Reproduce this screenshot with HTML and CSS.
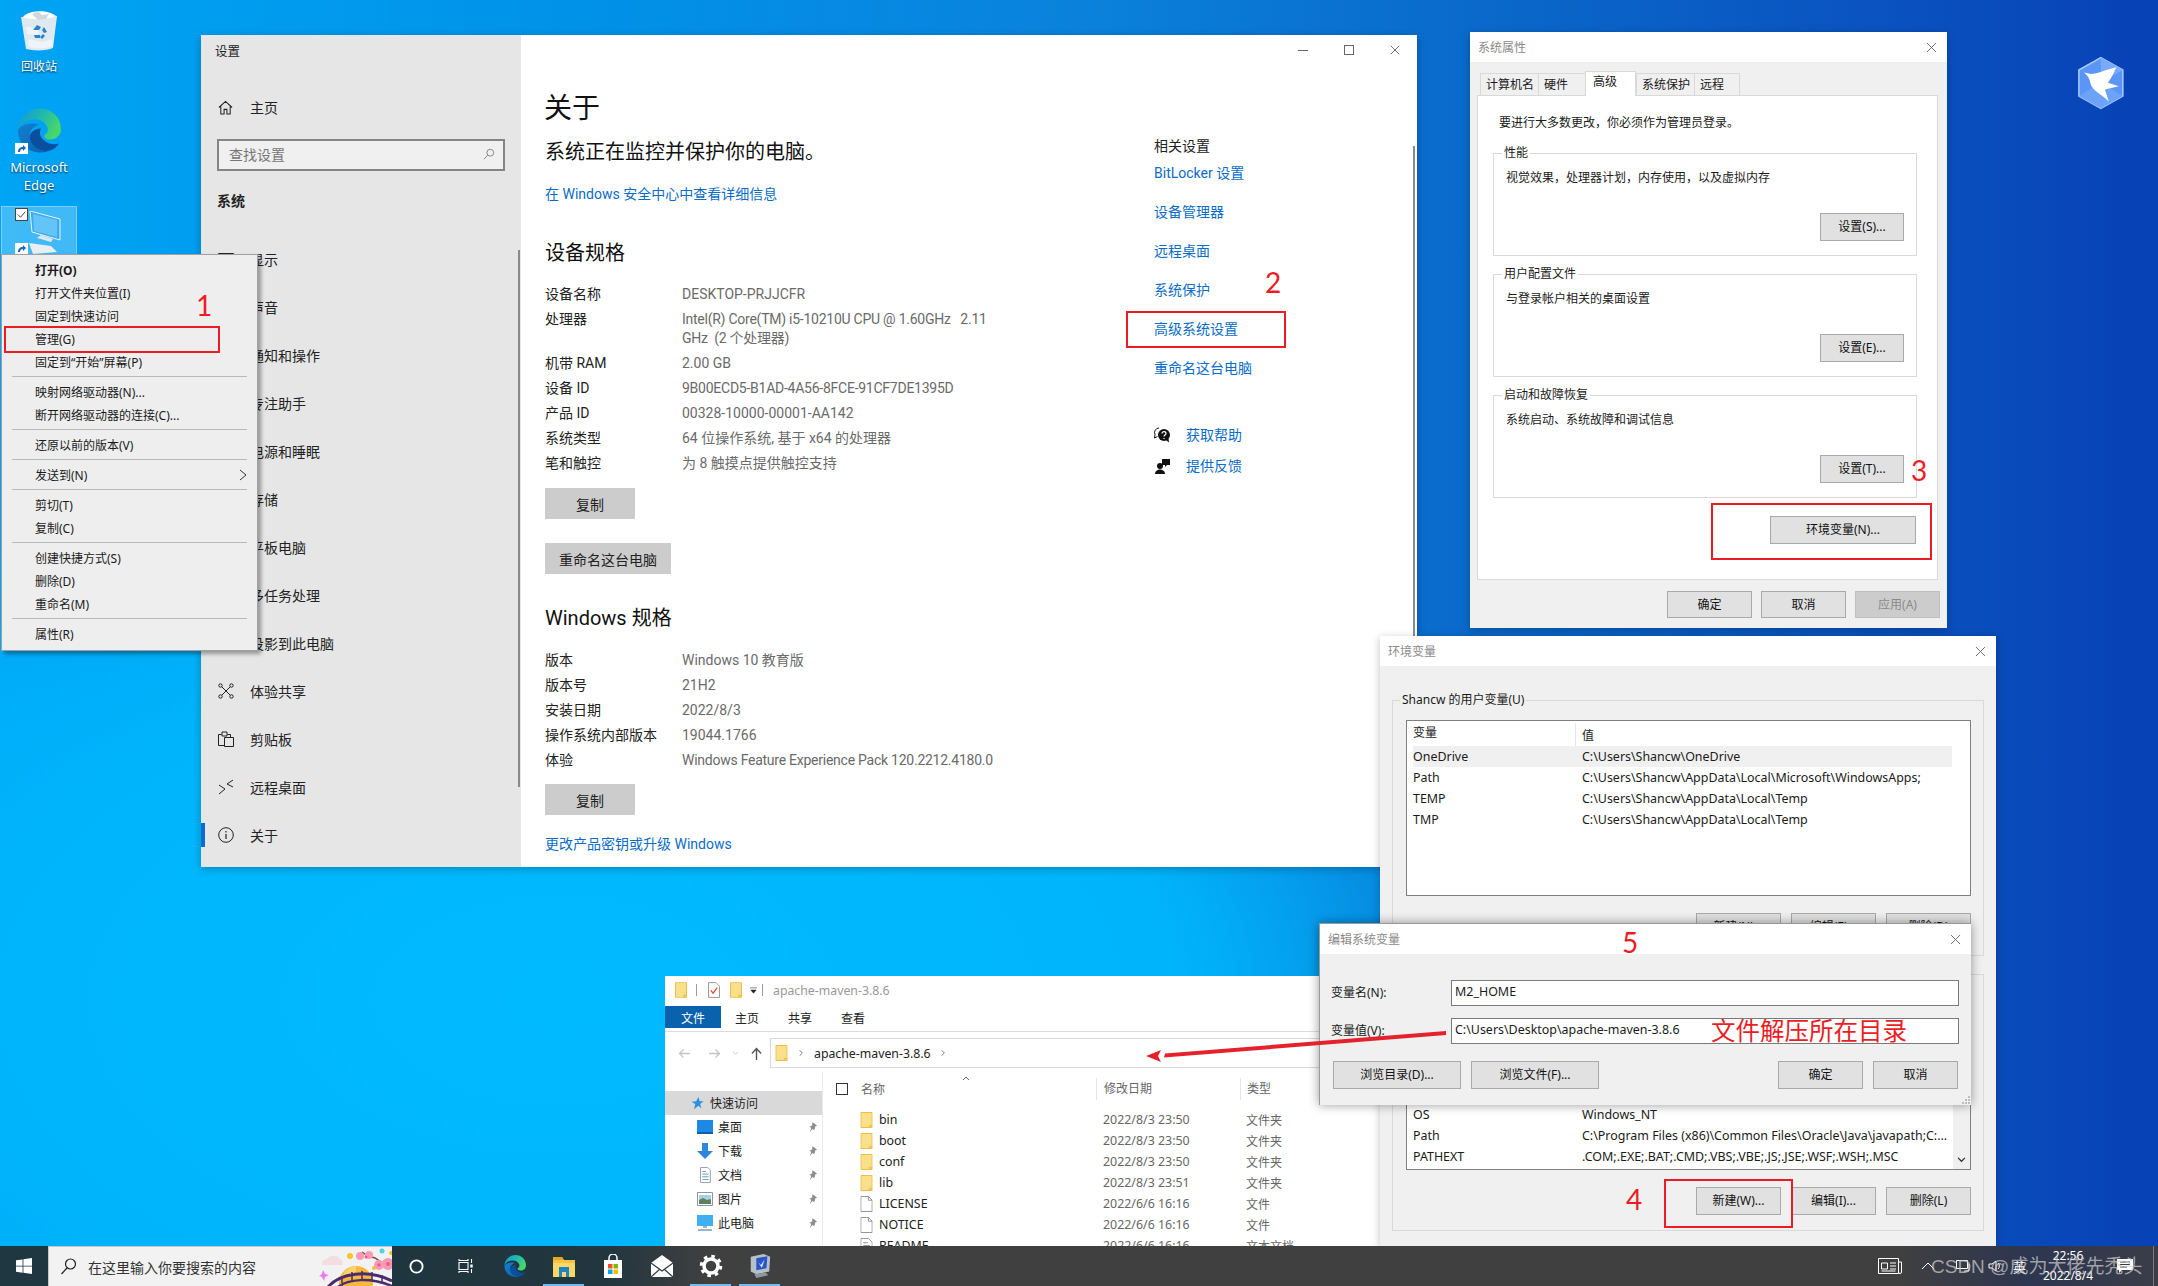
FILE: index.html
```html
<!DOCTYPE html>
<html lang="zh-CN">
<head>
<meta charset="utf-8">
<title>Windows 10 环境变量设置</title>
<link rel="stylesheet" href="styles.css">
</head>
<body>
<svg class="sprite" aria-hidden="true">
  <symbol id="x" viewBox="0 0 12 12"><path d="M1 1l10 10M11 1L1 11" fill="none" stroke="currentColor" stroke-width="1"/></symbol>
  <symbol id="folder" viewBox="0 0 13 17"><path d="M.5.5h12v16H.5z" fill="#fbe08c" stroke="#e6b93f"/><path d="M9 16.500v-3h3.500v3z" fill="#f2c552"/></symbol>
  <symbol id="file" viewBox="0 0 13 17"><path d="M.5.5h8l4 4v12H.5z" fill="#fff" stroke="#8f8f8f"/><path d="M8.500.5v4h4" fill="none" stroke="#8f8f8f"/></symbol>
  <symbol id="textfile" viewBox="0 0 13 17"><path d="M.5.5h8l4 4v12H.5z" fill="#fff" stroke="#8f8f8f"/><path d="M3 5h5M3 8h7M3 11h7" stroke="#8f8f8f"/></symbol>
  <symbol id="pin" viewBox="0 0 12 14"><path d="M6 1l5 4-2 1-1 4-2-1.500-3 3.500 1.600-4.400L2.500 6l3-1z" fill="#8a8f96"/></symbol>
  <symbol id="chev" viewBox="0 0 6 10"><path d="M1 1l4 4-4 4" fill="none" stroke="#666" stroke-width="1.300"/></symbol>
  <symbol id="arrow-sc" viewBox="0 0 13 11"><path d="M0 0h13v11H0z" fill="#fff"/><path d="M3 9c0-3 2-5 5-5V2l3 3-3 3V6c-2 0-3 1-3 3z" fill="#1565c8"/></symbol>
</svg>

<div class="desktop">
  <main class="canvas">

    <div class="desk-column">
      <div class="desk-icon recycle">
        <svg class="recycle-img" viewBox="0 0 38 43">
          <path d="M1 8l36-1-4 32c-6 3-20 3-27 1z" fill="#dfe9f0"/>
          <path d="M3 8C8 1 28 0 36 7 26 11 12 11 3 8z" fill="#fff"/>
          <path d="M12 5l6-3 4 4 7-1-3 5-8 1z" fill="#cfd8df"/>
          <path d="M6 18l13 1-1 7-11-1zM8 30l14 3 10-3 1 7c-8 3-18 3-24 1z" fill="#eef4f8"/>
          <path d="M13 21l4-5 4 2-2 3zM24 18l3 5-3 1-2-3zM14 26h6v3h-5zM25 27l-3 3-2-2 3-3z" fill="#2b83c9"/>
        </svg>
        <span class="desk-label">回收站</span>
      </div>
      <div class="desk-icon edge">
        <span class="edge-wrap">
          <svg class="edge-img" viewBox="0 0 48 48"><use href="#edge-logo"/></svg>
          <svg class="sc-badge" viewBox="0 0 13 11"><use href="#arrow-sc"/></svg>
        </span>
        <span class="desk-label">Microsoft<br>Edge</span>
      </div>
      <div class="desk-icon pc">
        <span class="pc-check">
          <svg viewBox="0 0 12 12"><path d="M2 6l3 3 5-6" fill="none" stroke="#333" stroke-width="1"/></svg>
        </span>
        <svg class="pc-img" viewBox="0 0 32 44">
          <path d="M1 0l30 8v21L3 21z" fill="#3fa9ef" stroke="#e8f4fb"/>
          <path d="M4 3l24 6v17L5 20z" fill="#63c4f7"/>
          <path d="M12 24l12 4-2 3-14-4z" fill="#dfe6ec"/>
          <path d="M0 32l22 3 6 6-24 2z" fill="#e9eef2"/>
        </svg>
        <svg class="sc-badge pc-badge" viewBox="0 0 13 11"><use href="#arrow-sc"/></svg>
      </div>
    </div>

    <svg class="bird" viewBox="105 40 155 175">
      <path d="M182 47l71 40v84l-71 40-71-40V87z" fill="#5b96f7" stroke="#a9c8fb" stroke-width="5"/>
      <path d="M182 47l71 40-71 40z" fill="#78aaf9"/>
      <path d="M111 171l71-44 71 44-71 40z" fill="#6ca2f8"/>
      <path d="M127 95l23 5c20 0 50-15 82-22-10 22-17 37-27 50l35 12-45 10 13 40c-18-20-43-30-56-50-6-15-4-30-25-45z" fill="#fff"/>
    </svg>

    <!-- 设置 -->
    <section class="settings window-shadow">
      <aside class="set-side">
        <div class="set-title">设置</div>
        <div class="set-home">
          <svg class="nav-icon" viewBox="0 0 16 16"><path d="M1 8l7-6.500L15 8M3 7v8h3.500v-5h3v5H13V7" fill="none" stroke="#222" stroke-width="1.100"/></svg>
          <span>主页</span>
        </div>
        <div class="set-search">
          <span>查找设置</span>
          <svg class="set-search-icon" viewBox="0 0 14 14"><circle cx="8.500" cy="5.500" r="4" fill="none" stroke="#777"/><path d="M5.500 8.500L1 13" stroke="#777"/></svg>
        </div>
        <div class="set-group">系统</div>
        <nav class="set-nav">
          <div class="nav-row"><svg class="nav-icon" viewBox="0 0 16 16"><path d="M.5 2.500h15v10H.5z" fill="none" stroke="#222"/></svg><span>显示</span></div>
          <div class="nav-row"><span class="nav-icon"></span><span>声音</span></div>
          <div class="nav-row"><span class="nav-icon"></span><span>通知和操作</span></div>
          <div class="nav-row"><span class="nav-icon"></span><span>专注助手</span></div>
          <div class="nav-row"><span class="nav-icon"></span><span>电源和睡眠</span></div>
          <div class="nav-row"><span class="nav-icon"></span><span>存储</span></div>
          <div class="nav-row"><span class="nav-icon"></span><span>平板电脑</span></div>
          <div class="nav-row"><span class="nav-icon"></span><span>多任务处理</span></div>
          <div class="nav-row"><span class="nav-icon"></span><span>投影到此电脑</span></div>
          <div class="nav-row"><svg class="nav-icon" viewBox="0 0 16 16"><g fill="none" stroke="#222"><circle cx="2.500" cy="2.500" r="1.700"/><circle cx="13.500" cy="2.500" r="1.700"/><circle cx="2.500" cy="13.500" r="1.700"/><circle cx="13.500" cy="13.500" r="1.700"/><path d="M4 4l8 8M12 4l-8 8"/></g></svg><span>体验共享</span></div>
          <div class="nav-row"><svg class="nav-icon" viewBox="0 0 16 16"><g fill="none" stroke="#222"><path d="M.5 3.500h3M9.500 3.500h3v3M.5 3.500v11h6"/><path d="M6.500 6.500h9v9h-9zM4 1v4h5V1z" fill="#e6e6e6"/></g></svg><span>剪贴板</span></div>
          <div class="nav-row"><svg class="nav-icon" viewBox="0 0 16 16"><g fill="none" stroke="#222"><path d="M1 6l6 4-6 5M15 1L9 5l6 3"/></g></svg><span>远程桌面</span></div>
          <div class="nav-row nav-active"><svg class="nav-icon" viewBox="0 0 16 16"><circle cx="8" cy="8" r="7.300" fill="none" stroke="#222"/><path d="M8 7v5M8 4v1.500" stroke="#222" stroke-width="1.200"/></svg><span>关于</span></div>
        </nav>
        <div class="side-scroll"></div>
      </aside>
      <div class="set-main">
        <div class="set-left">
          <h1 class="set-h1">关于</h1>
          <p class="set-status">系统正在监控并保护你的电脑。</p>
          <div class="link set-seclink">在 Windows 安全中心中查看详细信息</div>
          <h2 class="set-h2">设备规格</h2>
          <dl class="spec">
            <dt>设备名称</dt><dd>DESKTOP-PRJJCFR</dd>
            <dt>处理器</dt><dd class="tight">Intel(R) Core(TM) i5-10210U CPU @ 1.60GHz&nbsp;&nbsp; 2.11<br>GHz&nbsp; (2 个处理器)</dd>
            <dt>机带 RAM</dt><dd>2.00 GB</dd>
            <dt>设备 ID</dt><dd class="tight">9B00ECD5-B1AD-4A56-8FCE-91CF7DE1395D</dd>
            <dt>产品 ID</dt><dd>00328-10000-00001-AA142</dd>
            <dt>系统类型</dt><dd>64 位操作系统, 基于 x64 的处理器</dd>
            <dt>笔和触控</dt><dd>为 8 触摸点提供触控支持</dd>
          </dl>
          <div class="set-btn set-copy1">复制</div>
          <div class="set-btn set-rename">重命名这台电脑</div>
          <h2 class="set-h2 set-h2b">Windows 规格</h2>
          <dl class="spec">
            <dt>版本</dt><dd>Windows 10 教育版</dd>
            <dt>版本号</dt><dd>21H2</dd>
            <dt>安装日期</dt><dd>2022/8/3</dd>
            <dt>操作系统内部版本</dt><dd>19044.1766</dd>
            <dt>体验</dt><dd class="tight">Windows Feature Experience Pack 120.2212.4180.0</dd>
          </dl>
          <div class="set-btn set-copy1">复制</div>
          <div class="link set-upgrade">更改产品密钥或升级 Windows</div>
        </div>
        <div class="set-right">
          <div class="rel-title">相关设置</div>
          <div class="link rel-link">BitLocker 设置</div>
          <div class="link rel-link">设备管理器</div>
          <div class="link rel-link">远程桌面</div>
          <div class="link rel-link">系统保护</div>
          <div class="link rel-link">高级系统设置</div>
          <div class="link rel-link">重命名这台电脑</div>
          <div class="rel-help">
            <svg class="rel-icon" viewBox="0 0 16 16"><path d="M5 1a4.500 4.500 0 0 0-4 6.500L.500 11l3-1.500" fill="#fff" stroke="#111"/><circle cx="10" cy="8" r="6" fill="#111"/><path d="M8 6.500c0-2.500 4-2.500 4 0 0 1.500-2 1.500-2 3M10 11v1" fill="none" stroke="#fff" stroke-width="1.200"/><path d="M12 13l3 2.500-.5-4z" fill="#111"/></svg>
            <span class="link">获取帮助</span>
          </div>
          <div class="rel-help rel-help2">
            <svg class="rel-icon" viewBox="0 0 16 16"><circle cx="6" cy="8" r="3" fill="#111"/><path d="M1 16c0-6 10-6 10 0z" fill="#111"/><path d="M8 1h8v6h-3l-2 2V7H8z" fill="#111"/></svg>
            <span class="link">提供反馈</span>
          </div>
        </div>
        <div class="win-controls">
          <span class="wc-min"></span><span class="wc-max"></span>
          <svg class="wc-x" viewBox="0 0 12 12"><use href="#x"/></svg>
        </div>
        <div class="main-scroll"></div>
      </div>
    </section>

    <!-- 系统属性 -->
    <section class="sysprop dialog window-shadow">
      <header class="dlg-title"><span>系统属性</span><svg class="dlg-x" viewBox="0 0 12 12"><use href="#x"/></svg></header>
      <div class="tabs">
        <div class="tab tab-a">计算机名</div>
        <div class="tab tab-b">硬件</div>
        <div class="tab tab-c tab-on">高级</div>
        <div class="tab tab-d">系统保护</div>
        <div class="tab tab-e">远程</div>
      </div>
      <div class="tab-panel">
        <p class="sp-intro">要进行大多数更改，你必须作为管理员登录。</p>
        <div class="group sp-group">
          <span class="legend">性能</span>
          <p class="sp-text">视觉效果，处理器计划，内存使用，以及虚拟内存</p>
          <div class="btn sp-btn">设置(S)...</div>
        </div>
        <div class="group sp-group">
          <span class="legend">用户配置文件</span>
          <p class="sp-text">与登录帐户相关的桌面设置</p>
          <div class="btn sp-btn">设置(E)...</div>
        </div>
        <div class="group sp-group">
          <span class="legend">启动和故障恢复</span>
          <p class="sp-text">系统启动、系统故障和调试信息</p>
          <div class="btn sp-btn">设置(T)...</div>
        </div>
        <div class="btn sp-env">环境变量(N)...</div>
      </div>
      <footer class="sp-foot">
        <div class="btn btn-w85">确定</div>
        <div class="btn btn-w85">取消</div>
        <div class="btn btn-w85 btn-off">应用(A)</div>
      </footer>
    </section>

    <!-- 资源管理器 -->
    <section class="explorer">
      <div class="ex-title">
        <svg class="ex-f" viewBox="0 0 13 17"><use href="#folder"/></svg>
        <span class="ex-bar"></span>
        <svg class="ex-doc" viewBox="0 0 13 17"><path d="M.5.5h8l4 4v12H.5z" fill="#fff" stroke="#8f8f8f"/><path d="M3 9l2.500 3L10 6" fill="none" stroke="#e0492b" stroke-width="1.300"/></svg>
        <svg class="ex-f ex-f2" viewBox="0 0 13 17"><use href="#folder"/></svg>
        <svg class="ex-drop" viewBox="0 0 8 8"><path d="M0 1h8M1 3.500h6L4 7z" fill="#222" stroke="#222" stroke-width=".6"/></svg>
        <span class="ex-bar ex-bar2"></span>
        <span class="ex-name">apache-maven-3.8.6</span>
      </div>
      <div class="ex-tabs">
        <div class="ex-file">文件</div>
        <div class="ex-tab">主页</div>
        <div class="ex-tab">共享</div>
        <div class="ex-tab">查看</div>
      </div>
      <div class="ex-nav">
        <svg class="ex-back" viewBox="0 0 14 12"><path d="M13 6H2M6 1.500L1.500 6 6 10.500" fill="none" stroke="#c4c4c4" stroke-width="1.400"/></svg>
        <svg class="ex-fwd" viewBox="0 0 14 12"><path d="M1 6h11M8 1.500L12.500 6 8 10.500" fill="none" stroke="#c4c4c4" stroke-width="1.400"/></svg>
        <svg class="ex-down" viewBox="0 0 8 6"><path d="M1 1l3 3 3-3" fill="none" stroke="#c4c4c4"/></svg>
        <svg class="ex-up" viewBox="0 0 12 14"><path d="M6 14V2M1 7l5-5.500L11 7" fill="none" stroke="#555" stroke-width="1.500"/></svg>
        <div class="ex-addr">
          <svg class="ex-addr-f" viewBox="0 0 13 17"><use href="#folder"/></svg>
          <svg class="ex-chev" viewBox="0 0 6 10"><use href="#chev"/></svg>
          <span class="ex-path">apache-maven-3.8.6</span>
          <svg class="ex-chev" viewBox="0 0 6 10"><use href="#chev"/></svg>
        </div>
      </div>
      <div class="ex-body">
        <div class="ex-side">
          <div class="ex-qa">
            <svg class="ex-star" viewBox="0 0 14 16"><path d="M8 1l1.500 5H14l-4 3 1.500 5L8 11l-5 4 1.500-6L0 6.500l5.500-.5z" fill="#2d8fe0"/></svg>
            <span>快速访问</span>
          </div>
          <div class="ex-qrow">
            <svg class="ex-qi" viewBox="0 0 16 14"><path d="M0 0h16v14H0z" fill="#1e88e5"/><path d="M0 12h16v2H0z" fill="#0d5fa8"/></svg>
            <span>桌面</span><svg class="ex-pin" viewBox="0 0 12 14"><use href="#pin"/></svg>
          </div>
          <div class="ex-qrow">
            <svg class="ex-qi" viewBox="0 0 16 16"><path d="M5 0h6v8h5l-8 8-8-8h5z" fill="#2f86dc"/></svg>
            <span>下载</span><svg class="ex-pin" viewBox="0 0 12 14"><use href="#pin"/></svg>
          </div>
          <div class="ex-qrow">
            <svg class="ex-qi" viewBox="0 0 16 18"><path d="M3 .5h8l3 3v14H3z" fill="#fff" stroke="#8a97a3"/><path d="M5 5h4M5 8h7M5 11h7M5 14h7" stroke="#5b8fb9"/></svg>
            <span>文档</span><svg class="ex-pin" viewBox="0 0 12 14"><use href="#pin"/></svg>
          </div>
          <div class="ex-qrow">
            <svg class="ex-qi" viewBox="0 0 16 14"><path d="M.5.500h15v13H.5z" fill="#fff" stroke="#8a97a3"/><path d="M2 3h12v5H2z" fill="#a9cfe4"/><path d="M2 8l4-2 4 2 4-1v5H2z" fill="#5d7f5a"/></svg>
            <span>图片</span><svg class="ex-pin" viewBox="0 0 12 14"><use href="#pin"/></svg>
          </div>
          <div class="ex-qrow">
            <svg class="ex-qi" viewBox="0 0 16 16"><path d="M0 0h16v11H0z" fill="#3fb0ef"/><path d="M6 11h4v2H6zM1 14h14v2H1z" fill="#9bb3c4"/></svg>
            <span>此电脑</span><svg class="ex-pin" viewBox="0 0 12 14"><use href="#pin"/></svg>
          </div>
        </div>
        <div class="ex-list">
          <div class="ex-head">
            <div class="col-name"><span class="ex-check"></span><span>名称</span></div>
            <svg class="ex-sort" viewBox="0 0 8 5"><path d="M1 4l3-3 3 3" fill="none" stroke="#666"/></svg>
            <div class="col-date ex-col-sep">修改日期</div>
            <div class="col-type ex-col-sep">类型</div>
          </div>
          <div class="ex-row"><div class="col-name"><svg class="ex-ri" viewBox="0 0 13 17"><use href="#folder"/></svg><span>bin</span></div><div class="col-date">2022/8/3 23:50</div><div class="col-type">文件夹</div></div>
          <div class="ex-row"><div class="col-name"><svg class="ex-ri" viewBox="0 0 13 17"><use href="#folder"/></svg><span>boot</span></div><div class="col-date">2022/8/3 23:50</div><div class="col-type">文件夹</div></div>
          <div class="ex-row"><div class="col-name"><svg class="ex-ri" viewBox="0 0 13 17"><use href="#folder"/></svg><span>conf</span></div><div class="col-date">2022/8/3 23:50</div><div class="col-type">文件夹</div></div>
          <div class="ex-row"><div class="col-name"><svg class="ex-ri" viewBox="0 0 13 17"><use href="#folder"/></svg><span>lib</span></div><div class="col-date">2022/8/3 23:51</div><div class="col-type">文件夹</div></div>
          <div class="ex-row"><div class="col-name"><svg class="ex-ri" viewBox="0 0 13 17"><use href="#file"/></svg><span>LICENSE</span></div><div class="col-date">2022/6/6 16:16</div><div class="col-type">文件</div></div>
          <div class="ex-row"><div class="col-name"><svg class="ex-ri" viewBox="0 0 13 17"><use href="#file"/></svg><span>NOTICE</span></div><div class="col-date">2022/6/6 16:16</div><div class="col-type">文件</div></div>
          <div class="ex-row"><div class="col-name"><svg class="ex-ri" viewBox="0 0 13 17"><use href="#textfile"/></svg><span>README</span></div><div class="col-date">2022/6/6 16:16</div><div class="col-type">文本文档</div></div>
        </div>
      </div>
    </section>

    <!-- 环境变量 -->
    <section class="envwin dialog window-shadow">
      <header class="dlg-title"><span>环境变量</span><svg class="dlg-x" viewBox="0 0 12 12"><use href="#x"/></svg></header>
      <div class="env-body">
        <div class="group env-group env-g1">
          <span class="legend">Shancw 的用户变量(U)</span>
          <div class="var-list">
            <div class="var-head"><span class="v1">变量</span><span class="v2">值</span></div>
            <div class="var-row var-sel"><span class="v1">OneDrive</span><span class="v2">C:\Users\Shancw\OneDrive</span></div>
            <div class="var-row"><span class="v1">Path</span><span class="v2">C:\Users\Shancw\AppData\Local\Microsoft\WindowsApps;</span></div>
            <div class="var-row"><span class="v1">TEMP</span><span class="v2">C:\Users\Shancw\AppData\Local\Temp</span></div>
            <div class="var-row"><span class="v1">TMP</span><span class="v2">C:\Users\Shancw\AppData\Local\Temp</span></div>
          </div>
          <div class="env-btns">
            <div class="btn btn-w85">新建(N)...</div>
            <div class="btn btn-w85">编辑(E)...</div>
            <div class="btn btn-w85">删除(D)</div>
          </div>
        </div>
        <div class="group env-group env-g2">
          <div class="var-list var-sys">
            <div class="var-row"><span class="v1">OS</span><span class="v2">Windows_NT</span></div>
            <div class="var-row"><span class="v1">Path</span><span class="v2">C:\Program Files (x86)\Common Files\Oracle\Java\javapath;C:...</span></div>
            <div class="var-row"><span class="v1">PATHEXT</span><span class="v2">.COM;.EXE;.BAT;.CMD;.VBS;.VBE;.JS;.JSE;.WSF;.WSH;.MSC</span></div>
            <div class="var-scroll"><svg viewBox="0 0 10 7"><path d="M1 1l4 4 4-4" fill="none" stroke="#333" stroke-width="1.500"/></svg></div>
          </div>
          <div class="env-btns">
            <div class="btn btn-w85">新建(W)...</div>
            <div class="btn btn-w85">编辑(I)...</div>
            <div class="btn btn-w85">删除(L)</div>
          </div>
        </div>
      </div>
    </section>

    <!-- 编辑系统变量 -->
    <section class="editwin dialog edit-shadow">
      <header class="dlg-title"><span>编辑系统变量</span><svg class="dlg-x" viewBox="0 0 12 12"><use href="#x"/></svg></header>
      <div class="ed-form">
        <label class="ed-label">变量名(N):</label><div class="ed-input">M2_HOME</div>
        <label class="ed-label">变量值(V):</label><div class="ed-input">C:\Users\Desktop\apache-maven-3.8.6</div>
      </div>
      <div class="ed-btns">
        <div class="btn btn-w128">浏览目录(D)...</div>
        <div class="btn btn-w128">浏览文件(F)...</div>
        <div class="ed-space"></div>
        <div class="btn btn-w85">确定</div>
        <div class="btn btn-w85">取消</div>
      </div>
      <svg class="ed-grip" viewBox="0 0 9 9"><path d="M7 1h2v2H7zM4 4h2v2H4zM7 4h2v2H7zM1 7h2v2H1zM4 7h2v2H4zM7 7h2v2H7z" fill="#bdbdbd"/></svg>
    </section>

    <!-- 右键菜单 -->
    <div class="ctx">
      <div class="ctx-item ctx-bold">打开(O)</div>
      <div class="ctx-item">打开文件夹位置(I)</div>
      <div class="ctx-item">固定到快速访问</div>
      <div class="ctx-item">管理(G)</div>
      <div class="ctx-item">固定到“开始”屏幕(P)</div>
      <div class="ctx-sep"></div>
      <div class="ctx-item">映射网络驱动器(N)...</div>
      <div class="ctx-item">断开网络驱动器的连接(C)...</div>
      <div class="ctx-sep"></div>
      <div class="ctx-item">还原以前的版本(V)</div>
      <div class="ctx-sep"></div>
      <div class="ctx-item"><span>发送到(N)</span><svg class="ctx-chev" viewBox="0 0 8 12"><path d="M1 1l6 5-6 5" fill="none" stroke="#333"/></svg></div>
      <div class="ctx-sep"></div>
      <div class="ctx-item">剪切(T)</div>
      <div class="ctx-item">复制(C)</div>
      <div class="ctx-sep"></div>
      <div class="ctx-item">创建快捷方式(S)</div>
      <div class="ctx-item">删除(D)</div>
      <div class="ctx-item">重命名(M)</div>
      <div class="ctx-sep"></div>
      <div class="ctx-item">属性(R)</div>
    </div>

    <!-- 标注 -->
    <div class="rbox rbox-1"></div>
    <div class="rbox rbox-2"></div>
    <div class="rbox rbox-3"></div>
    <div class="rbox rbox-4"></div>
    <div class="mark mark-1">1</div>
    <div class="mark mark-2">2</div>
    <div class="mark mark-3">3</div>
    <div class="mark mark-4">4</div>
    <div class="mark mark-5">5</div>
    <div class="note">文件解压所在目录</div>
    <svg class="arrow" viewBox="0 0 320 40">
      <path d="M301 0L20 22.500l-1 4L301 4z" fill="#e5222b"/>
      <path d="M1 25l15-6-3 6 3 6z" fill="#e5222b"/>
    </svg>
  </main>

  <footer class="taskbar">
    <div class="tb-start">
      <svg viewBox="0 0 16 16"><path d="M0 2.300l6.600-.9v6.300H0zM7.400 1.300L16 0v7.700H7.400zM0 8.400h6.600v6.300L0 13.800zM7.400 8.400H16V16l-8.600-1.200z" fill="#fff"/></svg>
    </div>
    <div class="tb-search">
      <svg class="tb-mag" viewBox="0 0 16 17"><circle cx="10" cy="6" r="5" fill="none" stroke="#222" stroke-width="1.200"/><path d="M6.500 10L1 16" stroke="#222" stroke-width="1.200"/></svg>
      <span class="tb-hint">在这里输入你要搜索的内容</span>
      <svg class="tb-doodle" viewBox="0 0 74 40">
        <path d="M4 18a5 5 0 0 1 5-6 8 8 0 0 1 13 0 4 4 0 0 1 2 6z" fill="#f3dde0"/>
        <circle cx="38" cy="36" r="17" fill="#f6b93f"/>
        <path d="M24 30a17 17 0 0 1 14-11v6z" fill="#fbd26b"/>
        <path d="M1 24l2 4 4 1-4 2-1 4-2-4-3-1 3-2z" transform="translate(4 -1)" fill="#e879f0"/>
        <path d="M44 5l6 4 7 2 9 6 8 3" fill="none" stroke="#7b4a4a" stroke-width="1.500"/>
        <circle cx="32" cy="9" r="3" fill="#f7c325"/><circle cx="56" cy="21" r="2" fill="#f7c325"/><circle cx="64" cy="4" r="2.500" fill="#4fd3ea"/><circle cx="73" cy="6" r="2" fill="#f7c325"/>
        <g fill="#f79ab5"><circle cx="42" cy="9" r="4"/><circle cx="51" cy="8" r="4"/><circle cx="61" cy="18" r="5"/><circle cx="70" cy="17" r="6"/></g>
        <g fill="#ee5f85"><circle cx="61" cy="18" r="1.800"/><circle cx="70" cy="17" r="2"/><circle cx="48" cy="10" r="1.500"/></g>
        <path d="M10 40C22 26 50 22 74 34" fill="none" stroke="#4b2d6b" stroke-width="3"/>
        <path d="M20 40C30 32 52 30 74 39" fill="none" stroke="#4b2d6b" stroke-width="2.500"/>
        <path d="M24 29v7M34 25v8M44 24v8M54 25v8M64 28v7" stroke="#4b2d6b" stroke-width="1.500"/>
      </svg>
    </div>
    <div class="tb-app">
      <svg class="tb-ring" viewBox="0 0 16 16"><circle cx="8" cy="8" r="6.500" fill="none" stroke="#fff" stroke-width="2"/></svg>
    </div>
    <div class="tb-app">
      <svg class="tb-ic" viewBox="0 0 16 16"><path d="M1 1v1.500h9V1M1 15v-1.500h9V15M1 4.500h9v7H1zM13.500 1v4M13.500 11v4" fill="none" stroke="#fff" stroke-width="1.100"/><path d="M12.300 6.500h2.400v3h-2.400z" fill="#fff"/></svg>
    </div>
    <div class="tb-app">
      <svg class="tb-ic tb-ic-l" viewBox="0 0 48 48"><use href="#edge-logo"/></svg>
    </div>
    <div class="tb-app tb-on">
      <svg class="tb-ic tb-ic-l" viewBox="0 0 24 24"><path d="M1 3h9l2 3h11v17H1z" fill="#f5c242"/><path d="M1 3h9l2 3H1z" fill="#e8a820"/><path d="M1 9h22v14H1z" fill="#fbd766"/><path d="M7 13h10v10h-3v-5h-4v5H7z" fill="#1f83c9"/></svg>
    </div>
    <div class="tb-app">
      <svg class="tb-ic tb-ic-l" viewBox="0 0 20 24"><path d="M1 6h18v18H1z" fill="#fff"/><path d="M6 8V4a4 4 0 0 1 8 0v4" fill="none" stroke="#fff" stroke-width="1.500"/><path d="M5 10h4.500v4.500H5z" fill="#f25022"/><path d="M10.500 10H15v4.500h-4.500z" fill="#7fba00"/><path d="M5 15.500h4.500V20H5z" fill="#00a4ef"/><path d="M10.500 15.500H15V20h-4.500z" fill="#ffb900"/></svg>
    </div>
    <div class="tb-app">
      <svg class="tb-ic tb-ic-l" viewBox="0 0 24 24"><path d="M1 9l11-8 11 8v14H1z" fill="#fff"/><path d="M1 9l11 8 11-8M1 23l9-8M23 23l-9-8" fill="none" stroke="#2c3c44" stroke-width="1.200"/></svg>
    </div>
    <div class="tb-app tb-on">
      <svg class="tb-ic tb-ic-l" viewBox="0 0 24 24"><circle cx="12" cy="12" r="7" fill="none" stroke="#fff" stroke-width="3.500"/><circle cx="12" cy="12" r="9.500" fill="none" stroke="#fff" stroke-width="3.500" stroke-dasharray="3.460 4"/></svg>
    </div>
    <div class="tb-app tb-on">
      <svg class="tb-ic tb-ic-l" viewBox="0 0 24 26"><path d="M2 3l14-3 7 3-1 16-14 3-6-3z" fill="#b7c0c8"/><path d="M8 4.500l12-2-1 13-11 2z" fill="#2a55c9"/><path d="M10 9l3 3 4-6-3 9z" fill="#e7eefb"/><path d="M6 22l12-2 3 3-13 3z" fill="#8f989f"/></svg>
    </div>

    <div class="tray">
      <svg class="tr-news" viewBox="0 0 24 16"><path d="M.5.500h20v15H.5zM20.500 4H23.500v10a1.500 1.500 0 0 1-3 0" fill="none" stroke="#fff"/><path d="M3.500 5h6v6h-6zM12 5h6M12 8h6M12 11h6M3.500 13h14" fill="none" stroke="#fff"/></svg>
      <svg class="tr-chev" viewBox="0 0 14 8"><path d="M1 7l6-6 6 6" fill="none" stroke="#fff"/></svg>
      <svg class="tr-mon" viewBox="0 0 14 14"><path d="M.5 1.500h11v8h-11zM13 5v7h-5" fill="none" stroke="#fff"/></svg>
      <svg class="tr-vol" viewBox="0 0 14 14"><path d="M1 5h3l4-3v10L4 9H1zM10 4a4 4 0 0 1 0 6" fill="none" stroke="#fff"/></svg>
      <span class="tr-ime">英</span>
      <div class="tr-clock"><span>22:56</span><span>2022/8/4</span></div>
      <svg class="tr-note" viewBox="0 0 16 14"><path d="M0 0h16v11H5l-3 3v-3H0z" fill="#fff"/><path d="M3 3h10M3 5.500h10M3 8h7" stroke="#3a3a3a"/></svg>
      <span class="tr-show"></span>
    </div>
  </footer>

  <div class="watermark">CSDN @成为大佬先秃头</div>
</div>

<svg class="sprite" aria-hidden="true">
  <defs>
    <linearGradient id="eg1" x1="0" y1="0" x2="1" y2=".4"><stop offset="0" stop-color="#1197d8"/><stop offset=".55" stop-color="#20b8b0"/><stop offset="1" stop-color="#46d66a"/></linearGradient>
    <linearGradient id="eg2" x1="0" y1="0" x2="1" y2="1"><stop offset="0" stop-color="#1181cf"/><stop offset="1" stop-color="#0c5fb0"/></linearGradient>
  </defs>
  <symbol id="edge-logo" viewBox="0 0 48 48">
    <path d="M3 24C3 12 13 2 25 2c12 0 21 9 21 21 0 6-5 10-11 10-4 0-6-2-6-4 3-2 5-5 3-9-3-6-9-8-15-7C9 14 4 19 3 24z" fill="url(#eg1)"/>
    <path d="M3 24c0 12 9 22 23 22 3 0 6-1 9-2-9 2-18-3-20-11-2-7 2-13 9-15C13 15 4 20 3 24z" fill="url(#eg2)"/>
    <path d="M15 33c2 8 11 13 20 11 4-1 7-4 9-7-6 2-12 0-16-4-3-3-4-7-2-11-7 0-13 5-11 11z" fill="#0a4f9e"/>
  </symbol>
</svg>
</body>
</html>
```
FILE: styles.css
```css
* { box-sizing: border-box; }
html, body { margin: 0; padding: 0; }
body {
  font-family: "Noto Sans", "Noto Sans CJK SC", sans-serif;
  font-size: 12px;
  color: #1a1a1a;
}
p, h1, h2, dl, dd { margin: 0; font-weight: 400; }
.sprite { position: absolute; width: 0; height: 0; overflow: hidden; }

.desktop {
  position: relative;
  width: 2158px;
  height: 1286px;
  overflow: hidden;
  display: flex;
  flex-direction: column;
}
.canvas {
  position: relative;
  flex: 1;
  background:
    radial-gradient(ellipse 1000px 560px at 560px 1000px, #00baff 0, #00b4fb 62%, rgba(0,176,250,0) 100%),
    linear-gradient(90deg, #00a4f4 0, #0093ea 25%, #0a82dc 50%, #0a6acb 68%, #0a4fbe 90%, #0741b6 100%);
}

/* 桌面图标 */
.desk-column { position: absolute; left: 1px; top: 0; width: 76px; display: flex; flex-direction: column; }
.desk-icon { display: flex; flex-direction: column; align-items: center; }
.desk-label { color: #fff; line-height: 18px; text-align: center; text-shadow: 0 1px 2px rgba(0,0,0,.75); }
.recycle { margin-top: 9px; }
.recycle-img { width: 38px; height: 43px; }
.recycle .desk-label { margin-top: 6px; }
.edge { margin-top: 30px; }
.edge-wrap { position: relative; width: 48px; height: 49px; }
.edge-img { width: 48px; height: 49px; display: block; }
.sc-badge { position: absolute; width: 13px; height: 11px; left: 0; bottom: 1px; }
.edge .desk-label { margin-top: 3px; font-size: 13px; }
.pc {
  position: relative;
  margin-top: 12px;
  height: 70px;
  background: rgba(255,255,255,.25);
  border: 1px solid rgba(255,255,255,.3);
}
.pc-check { position: absolute; left: 13px; top: 1px; width: 13px; height: 13px; background: #fff; border: 1px solid #444; display: flex; }
.pc-img { position: absolute; left: 27px; top: 4px; width: 32px; height: 44px; }
.pc-badge { left: 13px; top: 36px; bottom: auto; }

.bird { position: absolute; left: 2077px; top: 55px; width: 48px; height: 55px; }

.window-shadow { box-shadow: 0 2px 8px rgba(0,0,0,.25); }

/* 设置窗口 */
.settings {
  position: absolute;
  left: 201px;
  top: 35px;
  width: 1216px;
  height: 832px;
  display: flex;
  background: #fff;
  font-family: Roboto, "Noto Sans CJK SC", sans-serif;
}
.set-side { position: relative; width: 320px; background: #e6e6e6; font-size: 14px; color: #222; flex: none; }
.set-title { font-size: 12.500px; line-height: 20px; padding: 7px 0 0 14px; }
.set-home { display: flex; align-items: center; height: 20px; margin-top: 35px; padding-left: 17px; }
.nav-icon { width: 16px; height: 16px; flex: none; margin-right: 16px; }
.set-home .nav-icon { width: 15px; height: 15px; margin-right: 17px; }
.set-search {
  margin: 22px 0 0 16px;
  width: 288px;
  height: 32px;
  border: 2px solid #858585;
  background: #f0f0f0;
  color: #777;
  display: flex;
  align-items: center;
  justify-content: space-between;
  padding: 0 8px 2px 10px;
}
.set-search-icon { width: 12px; height: 12px; }
.set-group { font-weight: 700; line-height: 20px; margin: 20px 0 0 16px; }
.set-nav { margin-top: 24px; }
.nav-row { display: flex; align-items: center; height: 48px; padding-left: 17px; }
.nav-active { position: relative; }
.nav-active::before { content: ""; position: absolute; left: 0; top: 12px; width: 4px; height: 24px; background: #0a6ccd; }
.side-scroll { position: absolute; left: 317px; top: 215px; width: 2px; height: 537px; background: #8a8a8a; }

.set-main { position: relative; flex: 1; display: flex; padding-left: 24px; }
.set-left { width: 609px; flex: none; }
.set-h1 { font-size: 28px; line-height: 40px; margin: 54px 0 0 -1px; color: #111; }
.set-status { font-size: 20px; line-height: 28px; margin-top: 9px; color: #111; white-space: nowrap; }
.link { color: #0a6cc6; font-size: 14px; line-height: 20px; white-space: nowrap; }
.set-seclink { margin-top: 18px; }
.set-h2 { font-size: 20px; line-height: 28px; margin-top: 35px; color: #111; }
.set-h2b { margin-top: 30px; }
.spec {
  display: grid;
  grid-template-columns: 137px 1fr;
  row-gap: 6px;
  margin-top: 18px;
  font-size: 14px;
  line-height: 19px;
}
.set-h2b + .spec { margin-top: 19px; }
.spec dt { color: #222; white-space: nowrap; }
.spec dd { color: #6a6a6a; white-space: nowrap; }
.spec .tight { letter-spacing: -.25px; }
.set-btn {
  display: flex;
  align-items: center;
  justify-content: center;
  height: 31px;
  background: #cccccc;
  font-size: 14px;
  color: #222;
}
.set-copy1 { margin-top: 15px; width: 90px; }
.set-h2b ~ .set-copy1 { margin-top: 14px; }
.set-rename { margin-top: 24px; width: 126px; }
.set-upgrade { margin-top: 19px; }

.set-right { flex: 1; padding-top: 101px; font-size: 14px; }
.rel-title { line-height: 20px; color: #222; margin-bottom: 7px; }
.rel-link { margin-bottom: 19px; }
.rel-help { display: flex; align-items: center; height: 20px; margin-top: 47px; }
.rel-help2 { margin-top: 11px; }
.rel-icon { width: 16px; height: 16px; margin-right: 16px; flex: none; }

.win-controls {
  position: absolute;
  right: 17px;
  top: 10px;
  display: flex;
  align-items: center;
  gap: 36px;
  color: #555;
}
.wc-min { width: 10px; height: 1px; background: #666; }
.wc-max { width: 10px; height: 10px; border: 1px solid #666; }
.wc-x { width: 10px; height: 10px; color: #555; }
.main-scroll { position: absolute; right: 2px; top: 111px; bottom: 0; width: 2px; background: #8a8a8a; }

/* 对话框通用 */
.dialog { position: absolute; background: #f0f0f0; }
.dlg-title {
  height: 30px;
  background: #fff;
  color: #8a8a8a;
  display: flex;
  align-items: center;
  justify-content: space-between;
  padding: 0 10px 0 8px;
  font-size: 12px;
}
.dlg-x { width: 11px; height: 11px; color: #666; }
.btn {
  display: flex;
  align-items: center;
  justify-content: center;
  height: 28px;
  background: #e1e1e1;
  border: 1px solid #a9a9a9;
  color: #111;
  white-space: nowrap;
  flex: none;
  padding-bottom: 2px;
}
.btn-w85 { width: 85px; }
.btn-w128 { width: 128px; }
.btn-off { background: #cccccc; border-color: #bfbfbf; color: #8a8a8a; }

.group { position: relative; border: 1px solid #d9d9d9; }
.legend { position: absolute; left: 8px; top: -9px; line-height: 16px; padding: 0 2px; white-space: nowrap; }

/* 系统属性 */
.sysprop { left: 1470px; top: 32px; width: 477px; height: 596px; }
.tabs { display: flex; align-items: flex-end; height: 33px; padding-left: 10px; }
.tab {
  height: 22px;
  border: 1px solid #d9d9d9;
  border-bottom: 0;
  border-right: 0;
  background: #f0f0f0;
  padding-left: 5px;
  line-height: 22px;
}
.tab-a { width: 58px; }
.tab-b { width: 47px; }
.tab-c { width: 51px; }
.tab-d { width: 58px; }
.tab-e { width: 46px; border-right: 1px solid #d9d9d9; }
.tab-on { height: 25px; background: #fff; padding-left: 7px; position: relative; z-index: 1; margin-bottom: -1px; border-right: 1px solid #d9d9d9; line-height: 20px; }
.tab-panel {
  width: 461px;
  height: 485px;
  margin-left: 7px;
  background: #fff;
  border: 1px solid #d9d9d9;
  padding: 19px 20px 0 15px;
}
.sp-intro { line-height: 16px; margin-left: 6px; margin-bottom: 22px; }
.sp-group {
  height: 103px;
  margin-bottom: 18px;
  display: flex;
  flex-direction: column;
  padding: 16px 12px 0 12px;
}
.sp-group .legend { background: #fff; }
.sp-text { line-height: 16px; }
.sp-btn { align-self: flex-end; width: 84px; margin-top: 27px; }
.sp-env { width: 146px; margin-left: auto; margin-right: 1px; }
.sp-foot { display: flex; justify-content: flex-end; gap: 9px; padding: 11px 7px 0 0; }
.sp-foot .btn { height: 27px; }

/* 环境变量 */
.envwin { left: 1380px; top: 636px; width: 616px; height: 610px; }
.env-body { padding: 34px 12px 0 12px; }
.env-group { display: flex; flex-direction: column; }
.env-group .legend { background: #f0f0f0; left: 7px; }
.env-g1 { height: 256px; padding: 19px 12px 0 13px; }
.env-g2 { height: 257px; margin-top: 18px; padding: 19px 12px 0 13px; }
.var-list { position: relative; height: 176px; border: 1px solid #7f7f7f; background: #fff; padding: 2px 18px 0 6px; flex: none; }
.var-head { display: flex; height: 23px; align-items: center; }
.var-head .v1 { border-right: 1px solid #e5e5e5; height: 23px; line-height: 20px; }
.var-row { display: flex; height: 21px; align-items: center; white-space: nowrap; font-size: 12.450px; }
.v1 { width: 163px; padding-left: 0; flex: none; }
.v2 { padding-left: 6px; }
.var-sel { background: #f0f0f0; }
.var-sys { display: flex; flex-direction: column; justify-content: flex-end; padding-bottom: 2px; }
.var-scroll {
  position: absolute;
  right: 0;
  top: 0;
  bottom: 0;
  width: 17px;
  background: #f0f0f0;
  display: flex;
  align-items: flex-end;
  justify-content: center;
  padding-bottom: 6px;
}
.var-scroll svg { width: 9px; height: 6px; }
.env-btns { display: flex; justify-content: flex-end; gap: 10px; margin-top: 17px; }

/* 编辑系统变量 */
.editwin { left: 1319px; top: 923px; width: 652px; height: 182px; }
.edit-shadow { box-shadow: 0 0 10px rgba(0,0,0,.4); border: 1px solid #9a9a9a; border-width: 1px 0 0 1px; }
.ed-form {
  display: grid;
  grid-template-columns: 120px 508px;
  grid-auto-rows: 26px;
  row-gap: 12px;
  align-items: center;
  padding: 26px 0 0 11px;
}
.ed-label { white-space: nowrap; margin-top: -2px; }
.ed-input { height: 26px; line-height: 22px; background: #fff; border: 1px solid #7a7a7a; padding-left: 3px; font-size: 12.450px; }
.ed-btns { display: flex; gap: 10px; padding: 17px 13px 0 13px; }
.ed-space { flex: 1; }
.ed-grip { position: absolute; right: 1px; bottom: 1px; width: 9px; height: 9px; }

/* 资源管理器 */
.explorer { position: absolute; left: 665px; top: 976px; width: 715px; height: 270px; background: #fff; overflow: hidden; }
.ex-title { display: flex; align-items: center; height: 30px; padding: 0 0 2px 10px; color: #999; }
.ex-f { width: 12px; height: 16px; }
.ex-bar { width: 1px; height: 12px; background: #9a9a9a; margin-left: 9px; }
.ex-doc { width: 12px; height: 16px; margin-left: 11px; }
.ex-f2 { margin-left: 10px; }
.ex-drop { width: 7px; height: 7px; margin-left: 8px; }
.ex-bar2 { margin-left: 5px; }
.ex-name { margin-left: 10px; white-space: nowrap; font-size: 12.300px; }
.ex-tabs { display: flex; height: 26px; border-bottom: 1px solid #dcdcdc; padding-bottom: 3px; }
.ex-file { width: 56px; background: #0b62ac; color: #fff; display: flex; align-items: center; padding: 1px 0 0 16px; margin-right: 14px; }
.ex-tab { width: 53px; line-height: 25px; color: #222; }
.ex-nav { display: flex; align-items: center; height: 30px; margin-top: 6px; padding-left: 13px; }
.ex-back, .ex-fwd { width: 13px; height: 11px; }
.ex-fwd { margin-left: 17px; }
.ex-down { width: 7px; height: 5px; margin-left: 11px; }
.ex-up { width: 11px; height: 13px; margin-left: 12px; }
.ex-addr { flex: 1; display: flex; align-items: center; height: 30px; margin-left: 8px; border: 1px solid #d9d9d9; padding-left: 4px; }
.ex-addr-f { width: 13px; height: 16px; }
.ex-chev { width: 4px; height: 8px; margin-left: 11px; }
.ex-path { margin-left: 11px; color: #222; white-space: nowrap; font-size: 12.300px; }
.ex-path + .ex-chev { margin-left: 10px; }
.ex-body { display: flex; margin-top: 4px; }
.ex-side { width: 158px; flex: none; height: 200px; border-right: 1px solid #ececec; padding-top: 19px; }
.ex-qa { display: flex; align-items: center; height: 24px; width: 157px; background: #d9d9d9; padding-left: 26px; color: #222; }
.ex-star { width: 13px; height: 14px; margin-right: 6px; }
.ex-qrow { display: flex; align-items: center; height: 24px; padding-left: 32px; color: #222; }
.ex-qi { width: 16px; height: 16px; margin-right: 5px; flex: none; }
.ex-pin { width: 11px; height: 13px; margin-left: auto; margin-right: 4px; }
.ex-list { flex: 1; color: #666; }
.ex-head { position: relative; display: flex; height: 37px; padding-top: 6px; }
.ex-sort { position: absolute; left: 139px; top: 4px; width: 8px; height: 5px; }
.ex-head .col-name { height: 22px; padding-left: 13px; gap: 13px; color: #666; }
.ex-head .col-date, .ex-head .col-type { height: 22px; line-height: 22px; }
.ex-col-sep { border-left: 1px solid #e5e5e5; }
.ex-check { width: 12px; height: 12px; border: 1px solid #333; background: #fff; }
.ex-row { display: flex; height: 21px; align-items: center; }
.col-name { width: 273px; display: flex; align-items: center; padding-left: 37px; color: #222; white-space: nowrap; flex: none; }
.ex-row .col-name { font-size: 12.400px; }
.col-date { width: 144px; padding-left: 7px; white-space: nowrap; flex: none; }
.ex-row .col-date { font-size: 12.400px; }
.col-type { padding-left: 6px; white-space: nowrap; }
.ex-ri { width: 13px; height: 16px; margin-right: 6px; }

/* 右键菜单 */
.ctx {
  position: absolute;
  left: 1px;
  top: 254px;
  width: 257px;
  height: 397px;
  padding: 3px 0 5px;
  background: #eeeeee;
  border: 1px solid #a0a0a0;
  box-shadow: 3px 3px 4px rgba(0,0,0,.35);
  color: #1a1a1a;
}
.ctx-item { display: flex; align-items: center; justify-content: space-between; height: 23px; padding: 0 10px 0 33px; white-space: nowrap; }
.ctx-bold { font-weight: 700; }
.ctx-sep { height: 1px; margin: 3px 10px; background: #b9b9b9; }
.ctx-chev { width: 8px; height: 12px; }

/* 标注 */
.rbox { position: absolute; border: 2px solid #ed1c24; }
.rbox-1 { left: 4px; top: 326px; width: 216px; height: 27px; }
.rbox-2 { left: 1126px; top: 311px; width: 160px; height: 37px; }
.rbox-3 { left: 1711px; top: 503px; width: 221px; height: 57px; }
.rbox-4 { left: 1664px; top: 1179px; width: 129px; height: 49px; }
.mark {
  position: absolute;
  font-family: Lato, "Noto Sans", sans-serif;
  font-size: 28px;
  line-height: 28px;
  color: #ed1c24;
}
.mark-1 { left: 196px; top: 291px; }
.mark-2 { left: 1265px; top: 268px; }
.mark-3 { left: 1911px; top: 456px; }
.mark-4 { left: 1626px; top: 1185px; }
.mark-5 { left: 1622px; top: 928px; }
.note {
  position: absolute;
  left: 1711px;
  top: 1015px;
  font-family: "Noto Sans CJK SC", sans-serif;
  font-size: 24.500px;
  line-height: 30px;
  color: #ed1c24;
  white-space: nowrap;
}
.arrow { position: absolute; left: 1145px; top: 1031px; width: 320px; height: 40px; }

/* 任务栏 */
.taskbar {
  position: relative;
  height: 40px;
  flex: none;
  display: flex;
  background: linear-gradient(90deg, #1f3741 0, #21363f 28%, #404040 33%, #404040 88%, #2d3650 94%, #3a3d48 100%);
}
.tb-start { width: 48px; display: flex; align-items: center; justify-content: center; flex: none; }
.tb-start svg { width: 16px; height: 16px; }
.tb-search { width: 344px; background: #f2f2f2; display: flex; align-items: center; flex: none; overflow: hidden; border-top: 1px solid #c6c6c6; border-left: 1px solid #c6c6c6; }
.tb-mag { width: 17px; height: 17px; margin-left: 11px; }
.tb-hint { margin-left: 11px; font-size: 14px; color: #333; white-space: nowrap; }
.tb-doodle { width: 74px; height: 40px; margin-left: auto; flex: none; }
.tb-app { position: relative; width: 49px; display: flex; align-items: center; justify-content: center; flex: none; }
.tb-on::after { content: ""; position: absolute; left: 4px; right: 4px; bottom: 0; height: 2px; background: #76b9ed; }
.tb-ring { width: 15px; height: 15px; }
.tb-ic { width: 16px; height: 16px; }
.tb-ic-l { width: 24px; height: 24px; }
.tray { margin-left: auto; display: flex; align-items: center; padding-right: 4px; color: #fff; }
.tr-news { width: 24px; height: 16px; }
.tr-chev { width: 14px; height: 8px; margin-left: 19px; }
.tr-mon { width: 14px; height: 14px; margin-left: 21px; }
.tr-vol { width: 14px; height: 14px; margin-left: 18px; }
.tr-ime { width: 14px; margin-left: 11px; font-size: 13px; }
.tr-clock { display: flex; flex-direction: column; align-items: center; width: 52px; margin-left: 15px; line-height: 20px; }
.tr-note { width: 16px; height: 14px; margin-left: 23px; }
.tr-show { width: 1px; height: 40px; background: #7a7a7a; margin-left: 20px; }
.watermark {
  position: absolute;
  left: 1931px;
  top: 1254px;
  font-family: "Liberation Sans", "Noto Sans CJK SC", sans-serif;
  font-size: 19px;
  line-height: 26px;
  color: rgba(205,205,205,.72);
  white-space: nowrap;
}
```
